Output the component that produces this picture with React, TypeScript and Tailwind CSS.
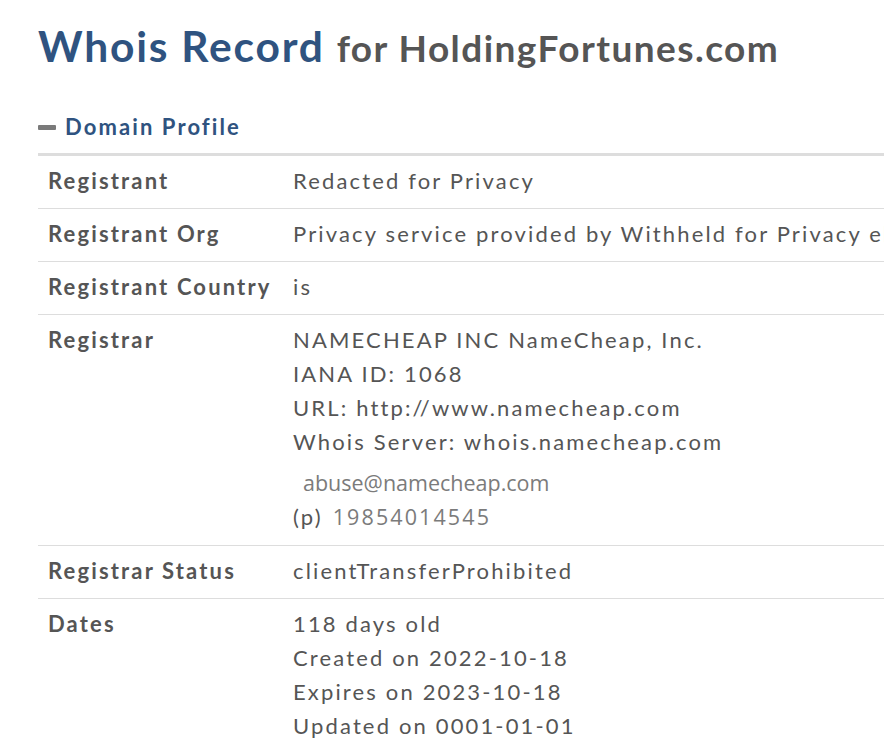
import React from "react";

const rows: { label: string; values: React.ReactNode[] }[] = [
  { label: "Registrant", values: ["Redacted for Privacy"] },
  { label: "Registrant Org", values: ["Privacy service provided by Withheld for Privacy ehf"] },
  { label: "Registrant Country", values: ["is"] },
];

export default function App() {
  return (
    <div className="w-[884px] h-[746px] overflow-hidden bg-white" style={{ fontFamily: "Lato, 'Open Sans', sans-serif" }}>
      <div className="pl-[38px] pt-[20px]">
        <h1 className="whitespace-nowrap leading-[52px]">
          <span className="text-[42.5px] font-bold text-[#2f5380] tracking-[1.8px]">Whois Record</span>
          <span className="ml-[12px] text-[37px] font-bold text-[#555555] tracking-[1.45px]">for HoldingFortunes.com</span>
        </h1>
        <div className="mt-[31px] flex items-center gap-[9px] text-[22px] font-bold text-[#2f5380] tracking-[2.1px] leading-[28px]">
          <span className="block w-[18px] h-[5px] bg-[#7a7a7a] rounded-[1px]" />
          <span>Domain Profile</span>
        </div>
        <div className="mt-[12px] w-[1000px] border-t-[3px] border-[#dddddd] text-[22px] text-[#555555] tracking-[2.15px] leading-[34px] whitespace-nowrap">
          {rows.map((r) => (
            <Row key={r.label} label={r.label}>
              {r.values.map((v, i) => (
                <div key={i}>{v}</div>
              ))}
            </Row>
          ))}
          <Row label="Registrar" pb="pb-[8px]">
            <div>NAMECHEAP INC NameCheap, Inc.</div>
            <div>IANA ID: 1068</div>
            <div>URL: http://www.namecheap.com</div>
            <div>Whois Server: whois.namecheap.com</div>
            <div className="mt-[9px] pl-[10px] h-[29px] leading-[29px] text-[21.5px] text-[#7b7b7b] tracking-normal" style={{ fontFamily: "'Open Sans', sans-serif" }}>
              abuse@namecheap.com
            </div>
            <div className="flex items-center h-[40px]">
              <span>(p)</span>
              <span className="ml-[10px] text-[21.5px] text-[#7b7b7b] tracking-[2.1px]" style={{ fontFamily: "'Open Sans', sans-serif" }}>19854014545</span>
            </div>
          </Row>
          <Row label="Registrar Status">
            <div>clientTransferProhibited</div>
          </Row>
          <Row label="Dates">
            <div>118 days old</div>
            <div>Created on 2022-10-18</div>
            <div>Expires on 2023-10-18</div>
            <div>Updated on 0001-01-01</div>
          </Row>
        </div>
      </div>
    </div>
  );
}

function Row({ label, children, pb = "pb-[10px]" }: { label: string; children: React.ReactNode; pb?: string }) {
  return (
    <div className={`flex border-b border-[#dddddd] pt-[8px] ${pb}`}>
      <div className="w-[255px] pl-[10px] font-bold shrink-0">{label}</div>
      <div>{children}</div>
    </div>
  );
}
